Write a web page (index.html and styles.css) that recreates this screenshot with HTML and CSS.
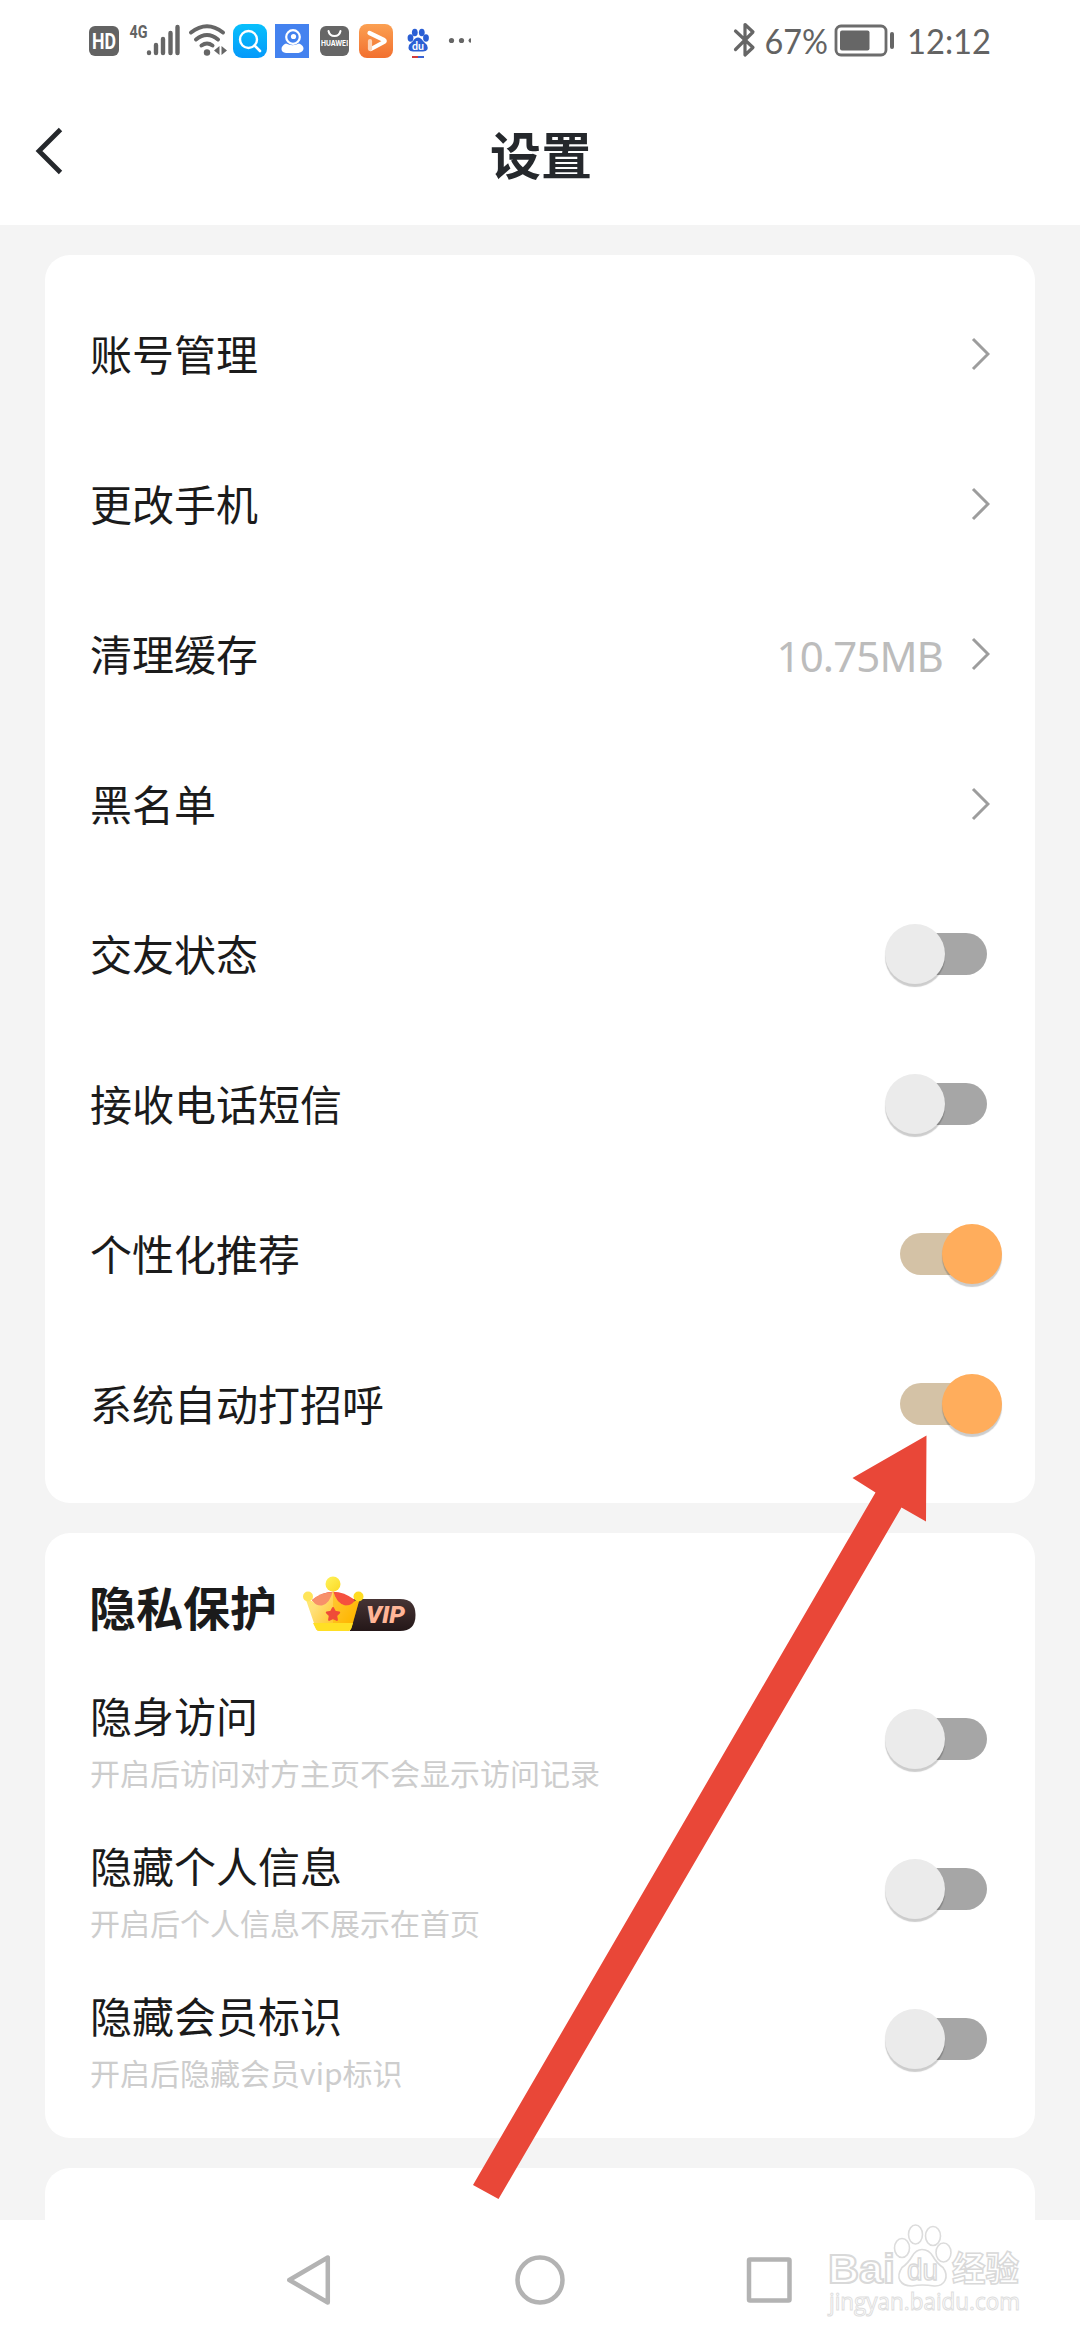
FILE: index.html
```html
<!DOCTYPE html>
<html lang="zh-CN">
<head>
<meta charset="utf-8">
<title>设置</title>
<link rel="stylesheet" href="styles.css">
</head>
<body>
<div class="phone">
  <div class="status">
    <svg class="status-icons" width="410" height="60" viewBox="80 15 410 60">
      <rect x="89" y="26" width="30" height="30" rx="6" fill="#636363"/>
      <text class="hd" x="92" y="49" textLength="24" lengthAdjust="spacingAndGlyphs">HD</text>
      <text class="net" x="129.500" y="38" textLength="18" lengthAdjust="spacingAndGlyphs">4G</text>
      <g stroke="#666" stroke-width="4.400" stroke-linecap="round">
        <path d="M149 52.500v.5M156 45v8M163 39v14M170.500 33v20M177.500 27v26"/>
      </g>
      <g fill="none" stroke="#666" stroke-width="4" stroke-linecap="round">
        <path d="M191 32.500q16-12.500 32 0M196 39.500q11-9 22 0M201.500 45.500q5.500-4 11 0"/>
      </g>
      <circle cx="207" cy="52.500" r="3.200" fill="#666"/>
      <path d="M219.500 46v9l-5.500-4.500zM221.500 46v9l5.500-4.500z" fill="#666"/>
      <defs>
        <linearGradient id="blue" x1="0" y1="0" x2="0" y2="1"><stop offset="0" stop-color="#08c0fc"/><stop offset="1" stop-color="#0599fa"/></linearGradient>
        <linearGradient id="orange" x1="0" y1="0" x2="0" y2="1"><stop offset="0" stop-color="#fba052"/><stop offset="1" stop-color="#f2702f"/></linearGradient>
      </defs>
      <rect x="233" y="24" width="34" height="34" rx="9" fill="url(#blue)"/>
      <circle cx="248.500" cy="39.500" r="8.500" fill="none" stroke="#fff" stroke-width="2.400"/>
      <path d="M254.500 45.500l5.500 5.500" stroke="#fff" stroke-width="2.600" stroke-linecap="round"/>
      <rect x="275" y="24" width="34" height="34" fill="#4482ef"/>
      <circle cx="293" cy="37" r="6.800" fill="none" stroke="#fff" stroke-width="2.200"/>
      <circle cx="293.500" cy="36.500" r="2.600" fill="#fff"/>
      <path d="M286 43.500q6.500 3.500 13 0q4.500 2 4.500 5t-5 4.500h-12.500q-4.500-.5-4.500-4t4.500-5.500z" fill="#fff"/>
      <rect x="320" y="26" width="29" height="30" rx="6" fill="#666"/>
      <path d="M328.500 31q1 5 6 5t6-5" fill="none" stroke="#fff" stroke-width="2" stroke-linecap="round"/>
      <text class="hw" x="321" y="46" textLength="27" lengthAdjust="spacingAndGlyphs">HUAWEI</text>
      <rect x="359" y="24" width="34" height="34" rx="8" fill="url(#orange)"/>
      <path d="M369.500 33l14.500 7q1.500 1 0 2l-13 7" fill="none" stroke="#fff" stroke-width="4.200" stroke-linecap="round" stroke-linejoin="round"/>
      <path d="M370 41v8" stroke="#fdd3b6" stroke-width="4.200" stroke-linecap="round"/>
      <g fill="#2b5fd4">
        <ellipse cx="410.500" cy="38" rx="2.900" ry="3.700"/><ellipse cx="414.800" cy="32.500" rx="2.900" ry="3.800"/>
        <ellipse cx="421.800" cy="32.500" rx="2.900" ry="3.800"/><ellipse cx="426" cy="38" rx="2.900" ry="3.700"/>
        <path d="M418 37.500q3 0 5 3.500l4 4q2.500 6-4 6.500h-10q-6-.5-4-6.500l4-4q2-3.500 5-3.500z"/>
      </g>
      <text class="du" x="412" y="49.500" textLength="12" lengthAdjust="spacingAndGlyphs">du</text>
      <path d="M412 57h6" stroke="#d23a3a" stroke-width="2"/><path d="M418 57h6" stroke="#3a63d2" stroke-width="2"/>
      <g fill="#666"><circle cx="451.500" cy="40.500" r="2.600"/><circle cx="461.500" cy="40.500" r="2.600"/><path d="M471 38.200q-2.500 0-2.500 2.300t2.500 2.300z"/></g>
    </svg>
    <svg class="status-right" width="280" height="60" viewBox="720 15 280 60">
      <path d="M735.500 31l17.500 16.500l-8 7.500v-30.500l8 7.500l-17.500 17.500" fill="none" stroke="#666" stroke-width="3.200" stroke-linejoin="round" stroke-linecap="round"/>
      <text class="clock" x="764.500" y="54" textLength="63.500" lengthAdjust="spacingAndGlyphs">67%</text>
      <rect x="836" y="26" width="50" height="29" rx="5" fill="none" stroke="#6c6c6c" stroke-width="2.800"/>
      <rect x="840" y="30.500" width="29.500" height="20" rx="2" fill="#666"/>
      <path d="M892 34v13" stroke="#666" stroke-width="4" stroke-linecap="round"/>
      <text class="clock" x="907" y="54" textLength="84" lengthAdjust="spacingAndGlyphs">12:12</text>
    </svg>
  </div>

  <header class="header">
    <svg width="32" height="60" viewBox="0 0 32 60"><path d="M28.500 6.500L7 28l21.500 21.500" fill="none" stroke="#25282c" stroke-width="4.800"/></svg>
    <h1 class="title">设置</h1>
    <span class="header-end"></span>
  </header>

  <main class="content">
    <section class="card card-main">
      <div class="row"><span class="label">账号管理</span><svg class="chev" viewBox="0 0 20 34"><path d="M3 2l15 15L3 32"/></svg></div>
      <div class="row"><span class="label">更改手机</span><svg class="chev" viewBox="0 0 20 34"><path d="M3 2l15 15L3 32"/></svg></div>
      <div class="row"><span class="label">清理缓存</span><span class="value">10.75MB</span><svg class="chev" viewBox="0 0 20 34"><path d="M3 2l15 15L3 32"/></svg></div>
      <div class="row"><span class="label">黑名单</span><svg class="chev" viewBox="0 0 20 34"><path d="M3 2l15 15L3 32"/></svg></div>
      <div class="row"><span class="label">交友状态</span><span class="switch"></span></div>
      <div class="row"><span class="label">接收电话短信</span><span class="switch"></span></div>
      <div class="row"><span class="label">个性化推荐</span><span class="switch on"></span></div>
      <div class="row"><span class="label">系统自动打招呼</span><span class="switch on"></span></div>
    </section>

    <section class="card card-privacy">
      <div class="card-head">
        <h2 class="subtitle">隐私保护</h2>
        <svg class="vip" width="114" height="58" viewBox="302 1575 114 58">
          <defs>
            <linearGradient id="gold" x1="0" y1="0" x2="1" y2=".5"><stop offset="0" stop-color="#fff06a"/><stop offset=".3" stop-color="#ffe07a"/><stop offset="1" stop-color="#ffb800"/></linearGradient>
            <linearGradient id="dark" x1="0" y1="0" x2="0" y2="1"><stop offset="0" stop-color="#463434"/><stop offset="1" stop-color="#241718"/></linearGradient>
            <linearGradient id="ball" x1="0" y1="0" x2="1" y2="1"><stop offset="0" stop-color="#fff35c"/><stop offset="1" stop-color="#fbd923"/></linearGradient>
          </defs>
          <path d="M350 1599h50q15.500 0 15.500 16t-15.500 16h-50z" fill="url(#dark)"/>
          <path d="M312 1600q21-16.500 43 0l-8 12h-26z" fill="#f5503e"/>
          <path d="M312 1600q8-7.500 21-8v20h-13z" fill="#f7906a"/>
          <path d="M305 1597q4 4 8 4.500 3 4.500 9 4 8-2 11-15 3 12.500 12 15 6 .5 9-4 4-1 6-4l-8.500 30q-1 3.500-4 3.500h-28q-3 0-4-3.500z" fill="url(#gold)"/>
          <path d="M333 1590.500q3 12.500 12 15 6 .5 9-4 4-1 6-4l-7 25.500h-20z" fill="#ffb400" opacity=".45"/>
          <path d="M313 1623h40l-1.500 5q-1 3-4 3h-28q-3 0-4-3z" fill="#ffdf24"/>
          <circle cx="333" cy="1584" r="7.500" fill="url(#ball)"/>
          <circle cx="308" cy="1596.500" r="5" fill="#ffe55a"/><circle cx="358.500" cy="1596.500" r="5" fill="#ffdc20"/>
          <path d="M333 1608l2 3.700 4.200.8-3 3.100.7 4.300-3.900-1.900-3.900 1.900.7-4.300-3-3.100 4.200-.8z" fill="#ef4c38" stroke="#ef4c38" stroke-width="2" stroke-linejoin="round"/>
          <text class="vip-text" x="366" y="1623" textLength="39" lengthAdjust="spacingAndGlyphs">VIP</text>
        </svg>
      </div>
      <div class="row"><div class="stack"><span class="label">隐身访问</span><span class="desc">开启后访问对方主页不会显示访问记录</span></div><span class="switch"></span></div>
      <div class="row"><div class="stack"><span class="label">隐藏个人信息</span><span class="desc">开启后个人信息不展示在首页</span></div><span class="switch"></span></div>
      <div class="row"><div class="stack"><span class="label">隐藏会员标识</span><span class="desc">开启后隐藏会员vip标识</span></div><span class="switch"></span></div>
    </section>

    <section class="card card-next"></section>
  </main>

  <nav class="nav">
    <svg width="1080" height="120" viewBox="0 2220 1080 120">
      <g fill="none" stroke="#b3b3b3" stroke-width="4.500" stroke-linejoin="round">
        <path d="M327.800 2257.500v45L289.300 2280z"/>
        <circle cx="540" cy="2280" r="22.500"/>
        <rect x="749" y="2259.500" width="40.500" height="41" rx="1"/>
      </g>
    </svg>
  </nav>

  <svg class="watermark" width="220" height="110" viewBox="820 2215 220 110">
    <g fill="#fff" stroke="#dcdcdc" stroke-width="1.600">
      <ellipse cx="902" cy="2248" rx="7.500" ry="9.500"/><ellipse cx="915.500" cy="2234.500" rx="7" ry="9.500"/>
      <ellipse cx="933" cy="2236" rx="7.500" ry="9.500"/><ellipse cx="943.500" cy="2252.500" rx="7.500" ry="9.500"/>
      <path d="M922 2249.500q7 0 11 7t10 11q5 7 2 13t-11 5.500q-12-2-22 0-9 0-12-5.500t2-13q6-4 10-11t10-7z"/>
    </g>
    <text class="wm wm-bold" x="828" y="2283" textLength="67" lengthAdjust="spacingAndGlyphs">Bai</text>
    <text class="wm wm-du" x="907" y="2280" textLength="31" lengthAdjust="spacingAndGlyphs">du</text>
    <text class="wm wm-cn" x="952" y="2281" textLength="67" lengthAdjust="spacingAndGlyphs">经验</text>
    <text class="wm wm-url" x="829" y="2310" textLength="191" lengthAdjust="spacingAndGlyphs">jingyan.baidu.com</text>
  </svg>

  <svg class="arrow" width="460" height="770" viewBox="470 1432 460 770">
    <path d="M926.500 1435.500L926 1521.500L901.500 1507.500L498.500 2199L473 2185L875.500 1492.500L852.500 1478z" fill="#e94738"/>
  </svg>
</div>
</body>
</html>
```
FILE: styles.css
```css
* { box-sizing: border-box; }
body {
  margin: 0;
  background: #fff;
  font-family: "Noto Sans CJK SC", sans-serif;
  color: #1b1b1b;
}
.phone {
  position: relative;
  width: 1080px;
  height: 2340px;
  overflow: hidden;
  display: flex;
  flex-direction: column;
}
.status {
  height: 82px;
  padding: 15px 80px 0;
  display: flex;
  justify-content: space-between;
}
.status text { fill: #636363; }
.status .hd { font: bold 22px Roboto, sans-serif; fill: #fff; }
.status .net { font: bold 19px Roboto, sans-serif; }
.status .hw { font: bold 8px Inter, sans-serif; fill: #fff; }
.status .du { font: bold 12px Lato, sans-serif; fill: #fff; }
.status .clock { font: 35px Lato, sans-serif; }
.header {
  height: 143px;
  padding: 0 31px 2px 32px;
  display: flex;
  align-items: center;
  justify-content: space-between;
}
.header-end { width: 31px; }
.title { margin: 0; font-size: 51px; line-height: 60px; font-weight: 700; color: #25282c; }
.content {
  flex: 1;
  padding: 30px 45px 0;
  background: #f4f4f4;
  display: flex;
  flex-direction: column;
  gap: 30px;
  overflow: hidden;
}
.card {
  background: #fff;
  border-radius: 25px;
  padding: 0 45px;
  flex: none;
}
.card-main { padding-top: 24px; padding-bottom: 24px; }
.card-privacy { height: 605px; }
.card-next { height: 52px; border-radius: 25px 25px 0 0; }
.card-head { height: 131px; padding-top: 42px; display: flex; gap: 25px; }
.subtitle { margin: -3px 0 0 -1px; font-size: 47px; line-height: 68px; font-weight: 700; }
.row { height: 150px; display: flex; align-items: center; }
.label { font-size: 42px; line-height: 60px; flex: 1; padding-bottom: 2px; }
.value { font: 42px/60px "Noto Sans", sans-serif; letter-spacing: -.9px; color: #bcbcbc; margin-right: 27px; padding-top: 3px; }
.chev { width: 20px; height: 34px; fill: none; stroke: #9d9d9d; stroke-width: 3; }
.switch {
  position: relative;
  width: 87px;
  height: 42px;
  margin-right: 3px;
  border-radius: 21px;
  background: #a6a6a6;
}
.switch::after {
  content: "";
  position: absolute;
  top: -9px;
  left: -15px;
  width: 60px;
  height: 60px;
  border-radius: 50%;
  background: #ebebeb;
  box-shadow: 0 3px 1px rgba(0, 0, 0, .2);
}
.switch.on { background: #d4c2a6; }
.switch.on::after { left: auto; right: -15px; background: #ffad5c; }
.vip-text { font: italic 900 23px Roboto, sans-serif; fill: #ffb597; }
.stack { flex: 1; display: flex; flex-direction: column; padding-top: 2px; }
.stack .label { flex: none; line-height: 62px; padding-bottom: 1px; }
.desc { font-size: 30px; line-height: 50px; color: #cdcdcd; }
.nav { height: 120px; background: #fff; }
.nav svg { display: block; }
.watermark { position: absolute; left: 820px; top: 2215px; }
.wm { fill: #fff; stroke: #d9d9d9; stroke-width: 1.5px; }
.wm-bold { font: bold 41px "Liberation Sans", sans-serif; stroke-width: 2px; }
.wm-du { font: 30px "Liberation Sans", sans-serif; }
.wm-cn { font: bold 34px "Noto Sans CJK SC", sans-serif; }
.wm-url { font: 24px "Open Sans", sans-serif; stroke: #dedede; stroke-width: 1px; }
.arrow { position: absolute; left: 470px; top: 1432px; }
```
